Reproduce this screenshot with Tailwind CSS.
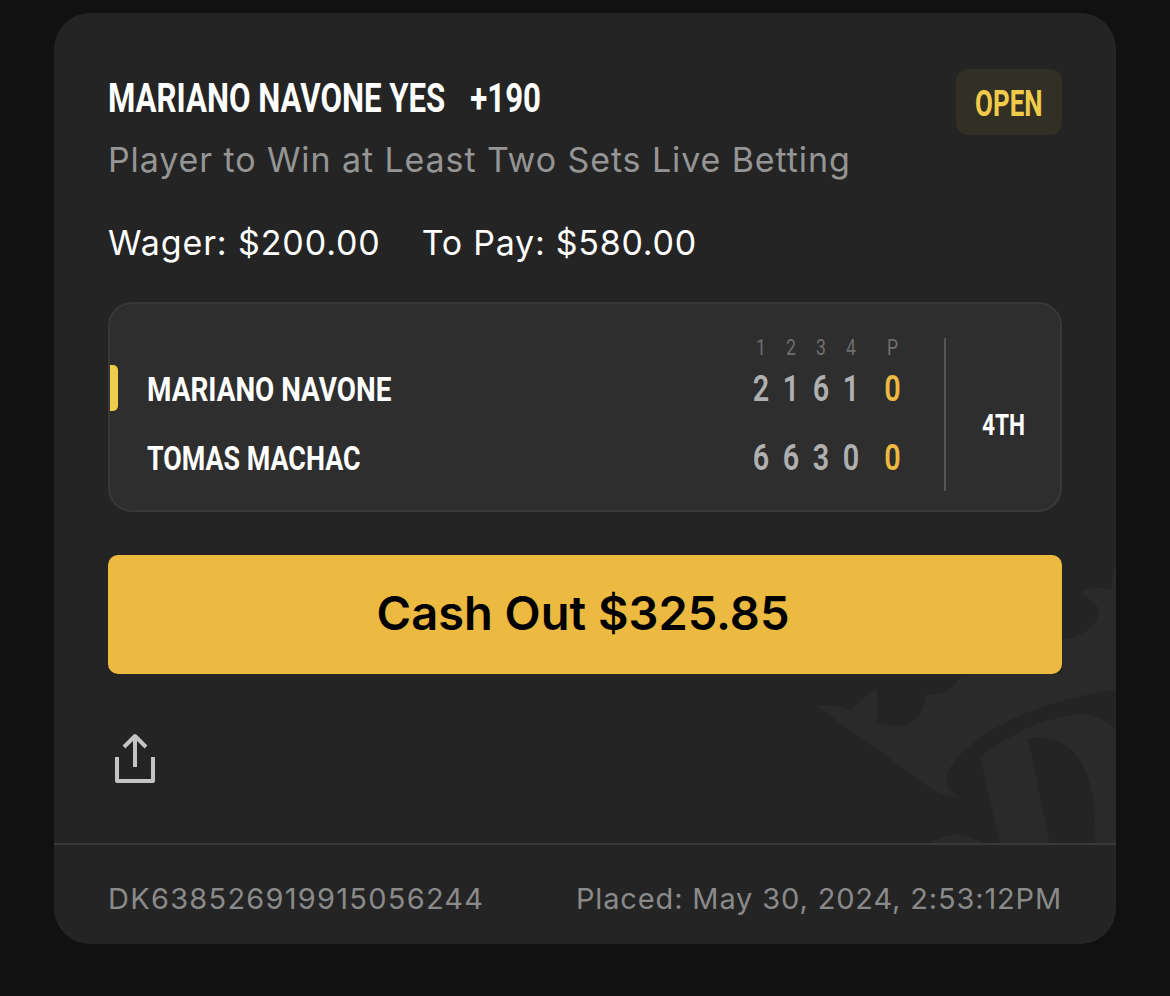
<!DOCTYPE html>
<html lang="en">
<head>
  <meta charset="UTF-8">
  <meta name="viewport" content="width=device-width, initial-scale=1.0">
  <title>Open bet</title>
  <script src="https://cdn.jsdelivr.net/npm/@tailwindcss/browser@4"></script>
</head>
<body class="bg-[#111111] w-[1170px] h-[996px] overflow-hidden font-['Inter',sans-serif]">
  <div class="relative overflow-hidden ml-[54px] mt-[13px] w-[1062px] h-[931px] rounded-[36px] bg-[#242424] flex flex-col">
    <!-- crown watermark -->
    <svg class="absolute left-0 top-0" width="1062" height="931" viewBox="54 13 1062 931" fill="#2a2a2a">
      <path d="M816 706 Q835 703 852 711 Q858 700 876 689 Q880 705 876 722 Q895 730 912 722 Q925 712 925 695 Q950 697 962 674 L1062 674 L1062 640 L1116 640 L1116 690 Q1010 705 960 755 Q940 775 950 790 L958 797 Q935 795 920 780 Z"/>
      <path fill-rule="evenodd" d="M980 757 Q1040 712 1090 715 Q1108 720 1116 730 L1116 844 L1000 844 Z M1028 738 L1050 844 L1095 844 Q1098 760 1060 742 Q1045 736 1028 738 Z"/>
      <path d="M1116 565 Q1110 580 1112 590 Q1095 585 1080 592 Q1095 602 1100 610 Q1095 635 1062 640 L1116 640 Z"/>
      <path d="M930 844 Q950 826 985 844 Z"/>
    </svg>

    <div class="relative flex-1 px-[54px] pt-[56px]">
      <div class="flex justify-between items-start">
        <div>
          <div class="flex h-[60px] items-center origin-left scale-x-[.78] font-['Roboto',sans-serif] font-bold text-[40px] text-white whitespace-nowrap">
            <span>MARIANO NAVONE YES</span>
            <span class="ml-[32px]">+190</span>
          </div>
          <p class="mt-[8px] text-[34px] leading-[46px] tracking-[0.9px] text-[#959595]">Player to Win at Least Two Sets Live Betting</p>
        </div>
        <div class="flex items-center justify-center w-[106px] h-[66px] pt-[3px] rounded-[12px] bg-[#322f24] font-['Roboto',sans-serif] font-bold text-[36px] text-[#f0cc4a]">
          <span class="scale-x-[.72]">OPEN</span>
        </div>
      </div>

      <div class="flex gap-[41px] mt-[37px] text-[34px] leading-[46px] text-white">
        <span class="tracking-[0.9px]">Wager: $200.00</span>
        <span class="tracking-[0.75px]">To Pay: $580.00</span>
      </div>

      <!-- score box -->
      <div class="relative mt-[36px] flex h-[210px] rounded-[24px] border-2 border-[#383838] bg-[#2e2e2e] font-['Roboto',sans-serif]">
        <span class="absolute left-0 top-[61px] w-[8px] h-[46px] rounded-r-[5px] bg-[#f0cc4a]"></span>
        <div class="flex flex-col flex-1 pl-[37px] pr-[36px] pt-[30px]">
          <div class="flex justify-end h-[26px] items-center text-[22px] text-[#6f6f6f]">
            <span class="w-[30px] text-center scale-x-[.8]">1</span>
            <span class="w-[30px] text-center scale-x-[.8]">2</span>
            <span class="w-[30px] text-center scale-x-[.8]">3</span>
            <span class="w-[30px] text-center scale-x-[.8]">4</span>
            <span class="w-[42px] pl-[14px] text-center scale-x-[.8]">P</span>
          </div>
          <div class="flex items-center h-[42px] mt-[8px]">
            <span class="flex-1 origin-left scale-x-[.82] font-bold text-[34px] text-white whitespace-nowrap">MARIANO NAVONE</span>
            <div class="flex font-semibold text-[36px] text-[#b0b0b0]">
              <span class="w-[30px] text-center scale-x-[.8]">2</span>
              <span class="w-[30px] text-center scale-x-[.8]">1</span>
              <span class="w-[30px] text-center scale-x-[.8]">6</span>
              <span class="w-[30px] text-center scale-x-[.8]">1</span>
              <span class="w-[42px] pl-[14px] text-center scale-x-[.8] text-[#ecb941]">0</span>
            </div>
          </div>
          <div class="flex items-center h-[42px] mt-[27px]">
            <span class="flex-1 origin-left scale-x-[.79] font-bold text-[34px] text-white whitespace-nowrap">TOMAS MACHAC</span>
            <div class="flex font-semibold text-[36px] text-[#b0b0b0]">
              <span class="w-[30px] text-center scale-x-[.8]">6</span>
              <span class="w-[30px] text-center scale-x-[.8]">6</span>
              <span class="w-[30px] text-center scale-x-[.8]">3</span>
              <span class="w-[30px] text-center scale-x-[.8]">0</span>
              <span class="w-[42px] pl-[14px] text-center scale-x-[.8] text-[#ecb941]">0</span>
            </div>
          </div>
        </div>
        <div class="w-[2px] mt-[34px] mb-[19px] bg-[#555555]"></div>
        <div class="w-[114px] pt-[38px] pl-[2px] flex items-center justify-center font-bold text-[29px] text-white">
          <span class="scale-x-[.78]">4TH</span>
        </div>
      </div>

      <button class="mt-[43px] w-full h-[119px] pb-[2px] pr-[4px] rounded-[10px] bg-[#ecb941] text-black text-[47px] font-semibold">Cash Out $325.85</button>

      <svg class="mt-[59px] ml-[5px]" width="44" height="52" viewBox="0 0 44 52" fill="none" stroke="#c4c4c4" stroke-width="4" stroke-linejoin="round">
        <path d="M22 34V3M11 14L22 3L33 14"/>
        <path d="M4 24V48H40V24"/>
      </svg>
    </div>

    <div class="relative h-[101px] pt-[8px] border-t-2 border-[#383838] bg-[#242424] px-[54px] flex items-center justify-between text-[29px] text-[#8a8a8a]">
      <span class="tracking-[1.25px]">DK638526919915056244</span>
      <span class="tracking-[0.85px]">Placed: May 30, 2024, 2:53:12PM</span>
    </div>
  </div>
</body>
</html>
